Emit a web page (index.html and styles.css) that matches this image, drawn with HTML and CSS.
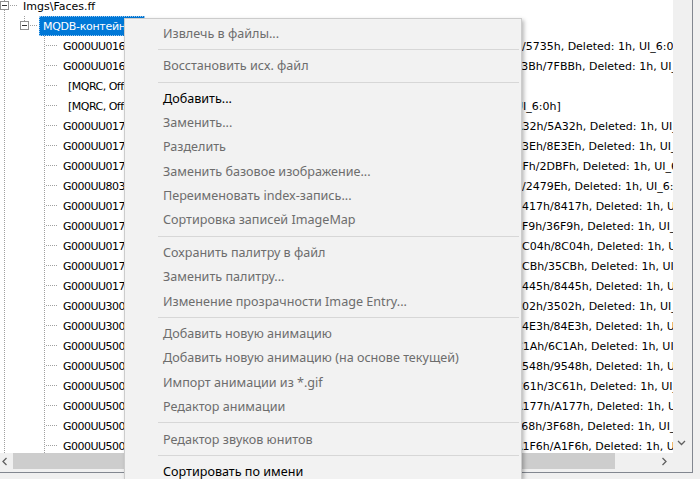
FILE: index.html
```html
<!DOCTYPE html>
<html lang="ru">
<head>
<meta charset="utf-8">
<title>Faces.ff</title>
<link rel="stylesheet" href="styles.css">
</head>
<body>
<div class="window">
  <div class="tree">
    <div class="tree-content">
      <div class="rows">
        <div class="row">
          <div class="node l0"><span class="vline full"></span><span class="hline"></span><svg class="box" width="9" height="9" viewBox="0 0 9 9"><rect x="0.5" y="0.5" width="8" height="8" fill="#fff" stroke="#919191"/><path d="M2 4.5h5" stroke="#333" stroke-width="1"/></svg></div>
          <div class="label">Imgs\Faces.ff</div>
        </div>
        <div class="row">
          <div class="gutter line"></div>
          <div class="node l1"><span class="vline top"></span><span class="hline"></span><svg class="box" width="9" height="9" viewBox="0 0 9 9"><rect x="0.5" y="0.5" width="8" height="8" fill="#fff" stroke="#919191"/><path d="M2 4.5h5" stroke="#333" stroke-width="1"/></svg></div>
          <div class="label selected">MQDB-контейнер</div>
        </div>

        <div class="row leaf"><div class="gutter line"></div><div class="gutter"></div><div class="node"><span class="vline full"></span><span class="hline"></span></div><div class="label"><span class="name">G000UU0165.bmp</span><span class="tail">h/5735h, Deleted: 1h, UI_6:0h]</span></div></div>
        <div class="row leaf"><div class="gutter line"></div><div class="gutter"></div><div class="node"><span class="vline full"></span><span class="hline"></span></div><div class="label"><span class="name">G000UU0166.bmp</span><span class="tail">F3Bh/7FBBh, Deleted: 1h, UI_6:0h]</span></div></div>
        <div class="row leaf"><div class="gutter line"></div><div class="gutter"></div><div class="node"><span class="vline full"></span><span class="hline"></span></div><div class="label"><span class="name shifted">[MQRC, Offset: 0h]</span></div></div>
        <div class="row leaf"><div class="gutter line"></div><div class="gutter"></div><div class="node"><span class="vline full"></span><span class="hline"></span></div><div class="label"><span class="name shifted">[MQRC, Offset: 3A40h]</span><span class="tail"> UI_6:0h]</span></div></div>
        <div class="row leaf"><div class="gutter line"></div><div class="gutter"></div><div class="node"><span class="vline full"></span><span class="hline"></span></div><div class="label"><span class="name">G000UU0170.bmp</span><span class="tail">A32h/5A32h, Deleted: 1h, UI_6:0h]</span></div></div>
        <div class="row leaf"><div class="gutter line"></div><div class="gutter"></div><div class="node"><span class="vline full"></span><span class="hline"></span></div><div class="label"><span class="name">G000UU0171.bmp</span><span class="tail">E3Eh/8E3Eh, Deleted: 1h, UI_6:0h]</span></div></div>
        <div class="row leaf"><div class="gutter line"></div><div class="gutter"></div><div class="node"><span class="vline full"></span><span class="hline"></span></div><div class="label"><span class="name">G000UU0172.bmp</span><span class="tail">BFh/2DBFh, Deleted: 1h, UI_6:0h]</span></div></div>
        <div class="row leaf"><div class="gutter line"></div><div class="gutter"></div><div class="node"><span class="vline full"></span><span class="hline"></span></div><div class="label"><span class="name">G000UU8030.bmp</span><span class="tail">h/2479Eh, Deleted: 1h, UI_6:0h]</span></div></div>
        <div class="row leaf"><div class="gutter line"></div><div class="gutter"></div><div class="node"><span class="vline full"></span><span class="hline"></span></div><div class="label"><span class="name">G000UU0173.bmp</span><span class="tail">8417h/8417h, Deleted: 1h, UI_6:0h]</span></div></div>
        <div class="row leaf"><div class="gutter line"></div><div class="gutter"></div><div class="node"><span class="vline full"></span><span class="hline"></span></div><div class="label"><span class="name">G000UU0174.bmp</span><span class="tail">6F9h/36F9h, Deleted: 1h, UI_6:0h]</span></div></div>
        <div class="row leaf"><div class="gutter line"></div><div class="gutter"></div><div class="node"><span class="vline full"></span><span class="hline"></span></div><div class="label"><span class="name">G000UU0175.bmp</span><span class="tail">8C04h/8C04h, Deleted: 1h, UI_6:0h]</span></div></div>
        <div class="row leaf"><div class="gutter line"></div><div class="gutter"></div><div class="node"><span class="vline full"></span><span class="hline"></span></div><div class="label"><span class="name">G000UU0176.bmp</span><span class="tail">5CBh/35CBh, Deleted: 1h, UI_6:0h]</span></div></div>
        <div class="row leaf"><div class="gutter line"></div><div class="gutter"></div><div class="node"><span class="vline full"></span><span class="hline"></span></div><div class="label"><span class="name">G000UU0177.bmp</span><span class="tail">8445h/8445h, Deleted: 1h, UI_6:0h]</span></div></div>
        <div class="row leaf"><div class="gutter line"></div><div class="gutter"></div><div class="node"><span class="vline full"></span><span class="hline"></span></div><div class="label"><span class="name">G000UU3000.bmp</span><span class="tail">502h/3502h, Deleted: 1h, UI_6:0h]</span></div></div>
        <div class="row leaf"><div class="gutter line"></div><div class="gutter"></div><div class="node"><span class="vline full"></span><span class="hline"></span></div><div class="label"><span class="name">G000UU3001.bmp</span><span class="tail">84E3h/84E3h, Deleted: 1h, UI_6:0h]</span></div></div>
        <div class="row leaf"><div class="gutter line"></div><div class="gutter"></div><div class="node"><span class="vline full"></span><span class="hline"></span></div><div class="label"><span class="name">G000UU5000.bmp</span><span class="tail">C1Ah/6C1Ah, Deleted: 1h, UI_6:0h]</span></div></div>
        <div class="row leaf"><div class="gutter line"></div><div class="gutter"></div><div class="node"><span class="vline full"></span><span class="hline"></span></div><div class="label"><span class="name">G000UU5001.bmp</span><span class="tail">9548h/9548h, Deleted: 1h, UI_6:0h]</span></div></div>
        <div class="row leaf"><div class="gutter line"></div><div class="gutter"></div><div class="node"><span class="vline full"></span><span class="hline"></span></div><div class="label"><span class="name">G000UU5002.bmp</span><span class="tail">C61h/3C61h, Deleted: 1h, UI_6:0h]</span></div></div>
        <div class="row leaf"><div class="gutter line"></div><div class="gutter"></div><div class="node"><span class="vline full"></span><span class="hline"></span></div><div class="label"><span class="name">G000UU5003.bmp</span><span class="tail">A177h/A177h, Deleted: 1h, UI_6:0h]</span></div></div>
        <div class="row leaf"><div class="gutter line"></div><div class="gutter"></div><div class="node"><span class="vline full"></span><span class="hline"></span></div><div class="label"><span class="name">G000UU5004.bmp</span><span class="tail">F68h/3F68h, Deleted: 1h, UI_6:0h]</span></div></div>
        <div class="row leaf"><div class="gutter line"></div><div class="gutter"></div><div class="node"><span class="vline full"></span><span class="hline"></span></div><div class="label"><span class="name">G000UU5005.bmp</span><span class="tail">A1F6h/A1F6h, Deleted: 1h, UI_6:0h]</span></div></div>
      </div>
    </div>
    <div class="vscroll">
      <div class="sbtn down"><svg width="9" height="6" viewBox="0 0 9 6"><path d="M1 1l3.5 3.5L8 1" fill="none" stroke="#606060" stroke-width="1.3"/></svg></div>
    </div>
    <div class="hscroll">
      <div class="sbtn left"><svg width="6" height="9" viewBox="0 0 6 9"><path d="M4.5 1L1 4.5 4.5 8" fill="none" stroke="#606060" stroke-width="1.3"/></svg></div>
      <div class="thumb"></div>
      <div class="track"></div>
      <div class="sbtn right"><svg width="6" height="9" viewBox="0 0 6 9"><path d="M1.5 1L5 4.5 1.5 8" fill="none" stroke="#606060" stroke-width="1.3"/></svg></div>
    </div>
    <div class="corner"></div>
  </div>

  <div class="menu">
    <div class="item disabled">Извлечь в файлы...</div>
    <div class="sep"></div>
    <div class="item disabled">Восстановить исх. файл</div>
    <div class="sep"></div>
    <div class="item">Добавить...</div>
    <div class="item disabled">Заменить...</div>
    <div class="item disabled">Разделить</div>
    <div class="item disabled">Заменить базовое изображение...</div>
    <div class="item disabled">Переименовать index-запись...</div>
    <div class="item disabled">Сортировка записей ImageMap</div>
    <div class="sep"></div>
    <div class="item disabled">Сохранить палитру в файл</div>
    <div class="item disabled">Заменить палитру...</div>
    <div class="item disabled">Изменение прозрачности Image Entry...</div>
    <div class="sep"></div>
    <div class="item disabled">Добавить новую анимацию</div>
    <div class="item disabled">Добавить новую анимацию (на основе текущей)</div>
    <div class="item disabled">Импорт анимации из *.gif</div>
    <div class="item disabled">Редактор анимации</div>
    <div class="sep"></div>
    <div class="item disabled">Редактор звуков юнитов</div>
    <div class="sep"></div>
    <div class="item">Сортировать по имени</div>
  </div>
</div>
</body>
</html>
```

FILE: styles.css
```css
* { box-sizing: border-box; }

html, body {
  margin: 0;
  padding: 0;
  width: 700px;
  height: 479px;
  overflow: hidden;
  background: #f0f0f0;
}

.window {
  position: relative;
  width: 700px;
  height: 479px;
  overflow: hidden;
}

/* ---------- tree control ---------- */
.tree {
  display: grid;
  grid-template-columns: 673px 19px;
  grid-template-rows: 453px 19px;
  width: 693px;
  height: 473px;
  background: #fff;
  border-right: 1px solid #828790;
  border-bottom: 1px solid #828790;
}

.tree-content {
  overflow: hidden;
  background: #fff;
  font-family: "DejaVu Sans", Verdana, sans-serif;
  font-size: 11px;
  color: #000;
}

.rows {
  margin-top: -4px;
}

.row {
  display: flex;
  height: 20px;
  white-space: nowrap;
}

.gutter {
  position: relative;
  flex: 0 0 20px;
  height: 20px;
}

.gutter.line::before {
  content: "";
  position: absolute;
  left: 4px;
  top: 0;
  width: 1px;
  height: 20px;
  background: repeating-linear-gradient(to bottom, #a0a0a0 0 1px, transparent 1px 2px);
}

.node {
  position: relative;
  flex: 0 0 19px;
  height: 20px;
}

.vline {
  position: absolute;
  left: 4px;
  top: 0;
  width: 1px;
  background: repeating-linear-gradient(to bottom, #a0a0a0 0 1px, transparent 1px 2px);
}

.vline.full { height: 20px; }
.vline.top { height: 9px; }

.hline {
  position: absolute;
  left: 5px;
  top: 9px;
  width: 12px;
  height: 1px;
  background: repeating-linear-gradient(to right, transparent 0 1px, #a0a0a0 1px 2px);
}

.box {
  position: absolute;
  left: 0;
  top: 5px;
  display: block;
}

.label {
  display: flex;
  align-items: center;
  height: 20px;
  padding: 0 4px;
}

.label.selected {
  background: #0078d7;
  color: #fff;
  outline: 1px dotted #9cc9f0;
  outline-offset: -1px;
  width: 106px;
  letter-spacing: -0.3px;
}

.name {
  flex: 0 0 452px;
  overflow: hidden;
  letter-spacing: -0.5px;
}

.name.shifted {
  padding-left: 5px;
}

.tail {
  flex: 0 0 auto;
}

/* ---------- scroll bars ---------- */
.vscroll {
  display: flex;
  flex-direction: column;
  justify-content: flex-end;
  background: #f0f0f0;
}

.sbtn {
  display: flex;
  align-items: center;
  justify-content: center;
}

.sbtn svg { display: block; }

.sbtn.down {
  height: 20px;
  padding-bottom: 1px;
  padding-right: 2px;
}

.hscroll {
  display: flex;
  align-items: flex-start;
  background: #f0f0f0;
}

.sbtn.left {
  flex: 0 0 13px;
  height: 17px;
  justify-content: flex-start;
  padding-left: 2px;
}

.thumb {
  flex: 0 0 602px;
  height: 16px;
  background: #cdcdcd;
}

.track {
  flex: 1 1 auto;
}

.sbtn.right {
  flex: 0 0 20px;
  height: 17px;
  padding-left: 1px;
}

.corner {
  background: #f0f0f0;
}

/* ---------- context menu ---------- */
.menu {
  position: absolute;
  left: 124px;
  top: 18px;
  width: 398px;
  height: 461px;
  overflow: hidden;
  padding-top: 2px;
  background: #f2f2f2;
  border: 1px solid #cccccc;
  border-bottom: 0;
  box-shadow: 2px 2px 4px rgba(0, 0, 0, 0.28);
  font-family: "Noto Sans", "Open Sans", sans-serif;
  font-size: 12.6px;
  color: #000;
}

.item {
  display: flex;
  align-items: center;
  height: 24.3px;
  padding-left: 38px;
  white-space: nowrap;
}

.item.disabled {
  color: #6d6d6d;
}

.sep {
  display: flex;
  align-items: center;
  height: 8.3px;
  padding: 0 2px 0 33px;
}

.sep::after {
  content: "";
  flex: 1 1 auto;
  height: 1px;
  background: #d7d7d7;
}
```
